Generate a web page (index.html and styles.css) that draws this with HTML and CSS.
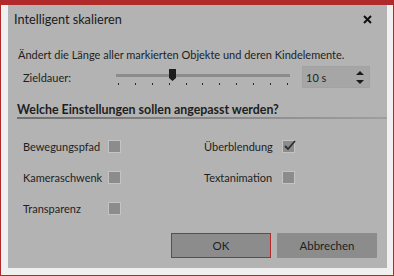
FILE: index.html
```html
<!DOCTYPE html>
<html>
<head>
    <link rel="stylesheet" href="styles.css">
</head>
<body>
    <div class="window">
        <div class="dialog">
            <div class="title-row">
                <span class="title">Intelligent skalieren</span>
                <svg class="close" width="9" height="9" viewBox="0 0 9 9">
                    <path d="M1 1 L8 8 M8 1 L1 8" stroke="#111" stroke-width="2"/>
                </svg>
            </div>

            <div class="desc">Ändert die Länge aller markierten Objekte und deren Kindelemente.</div>

            <div class="duration-row">
                <span class="label">Zieldauer:</span>
                <div class="slider">
                    <div class="track"></div>
                    <svg class="thumb" width="7" height="12" viewBox="0 0 7 12">
                        <path d="M0 0 H7 V9 L3.5 12 L0 9 Z" fill="#1e1e1e"/>
                    </svg>
                    <div class="ticks">
                        <i></i><i></i><i></i><i></i><i></i><i></i><i></i><i></i><i></i><i></i><i></i>
                    </div>
                </div>
                <div class="spin">
                    <span>10 s</span>
                    <svg width="8" height="13" viewBox="0 0 8 13">
                        <path d="M4 0 L8 4 H0 Z M0 9 H8 L4 13 Z" fill="#1a1a1a"/>
                    </svg>
                </div>
            </div>

            <h3 class="section">Welche Einstellungen sollen angepasst werden?</h3>

            <div class="options">
                <div class="opt left"><span>Bewegungspfad</span><div class="box"></div></div>
                <div class="opt right"><span>Überblendung</span>
                    <div class="box">
                        <svg width="14" height="12" viewBox="0 0 14 12">
                            <path d="M2 6 L5 9 L12 1" stroke="#2e2e2e" stroke-width="1.8" fill="none"/>
                        </svg>
                    </div>
                </div>
                <div class="opt left"><span>Kameraschwenk</span><div class="box"></div></div>
                <div class="opt right"><span>Textanimation</span><div class="box"></div></div>
                <div class="opt left"><span>Transparenz</span><div class="box"></div></div>
            </div>

            <div class="btn-row">
                <button class="btn btn-ok">OK</button>
                <button class="btn">Abbrechen</button>
            </div>
        </div>
    </div>
</body>
</html>
```

FILE: styles.css
```css
body {
    margin: 0;
    font-family: Lato, sans-serif;
    font-size: 11px;
    color: #1e1e1e;
}

.window {
    width: 394px;
    height: 276px;
    border: 1px solid #b0292b;
    border-top-width: 5px;
    background: #f0f0f0;
    padding: 0 6px 6px 7px;
    box-sizing: border-box;
}

.dialog {
    height: 263px;
    background: #b3b3b3;
}

.title-row {
    height: 28px;
    display: flex;
    align-items: center;
    justify-content: space-between;
    padding: 0 15px 0 6px;
}

.title {
    font-size: 12.7px;
    color: #1a1a1a;
}

.desc {
    margin-top: 14px;
    padding-left: 10px;
    line-height: 16px;
    white-space: nowrap;
}

.duration-row {
    margin-top: 3px;
    height: 22px;
    display: flex;
    align-items: center;
    padding-left: 15px;
}

.label {
    width: 93px;
    flex-shrink: 0;
    padding-top: 1px;
}

.slider {
    position: relative;
    width: 174px;
    height: 22px;
}

.track {
    margin-top: 8px;
    height: 3px;
    background: #8c8c8c;
}

.thumb {
    position: absolute;
    left: 53px;
    top: 3px;
}

.ticks {
    margin: 6px 2px 0 2px;
    display: flex;
    justify-content: space-between;
}

.ticks i {
    width: 1px;
    height: 2px;
    background: #2a2a2a;
}

.spin {
    margin-left: 12px;
    width: 68px;
    height: 22px;
    box-sizing: border-box;
    border: 1px solid #a2a2a2;
    background: #a6a6a6;
    display: flex;
    align-items: center;
    justify-content: space-between;
    padding: 0 5px 0 3px;
}

.section {
    margin: 14px 0 0 9px;
    font-size: 12.4px;
    font-weight: bold;
    line-height: 15px;
    padding-bottom: 0;
    border-bottom: 2px solid;
    border-image: linear-gradient(to right, #6e6e6e, #9e9e9e) 1;
    color: #1e1e1e;
}

.options {
    margin-top: 12px;
    padding-left: 15px;
    display: grid;
    grid-template-columns: 181px auto;
    grid-auto-rows: 31px;
}

.opt {
    display: flex;
    align-items: center;
}

.opt span {
    flex-shrink: 0;
    white-space: nowrap;
}

.left span {
    width: 85px;
}

.right span {
    width: 78px;
}

.box {
    position: relative;
    flex-shrink: 0;
    width: 13px;
    height: 13px;
    box-sizing: border-box;
    border: 1px solid #c4c4c4;
    background: #8c8c8c;
}

.box svg {
    position: absolute;
    left: 0;
    top: -1px;
}

.btn-row {
    margin-top: 9px;
    display: flex;
    justify-content: flex-end;
    gap: 6px;
    padding-right: 10px;
}

.btn {
    width: 100px;
    height: 25px;
    border: 1px solid #8c8c8c;
    background: #8c8c8c;
    font-family: Lato, sans-serif;
    font-size: 11.5px;
    color: #1e1e1e;
    padding: 0;
}

.btn-ok {
    border-color: #b0292b;
}
```
